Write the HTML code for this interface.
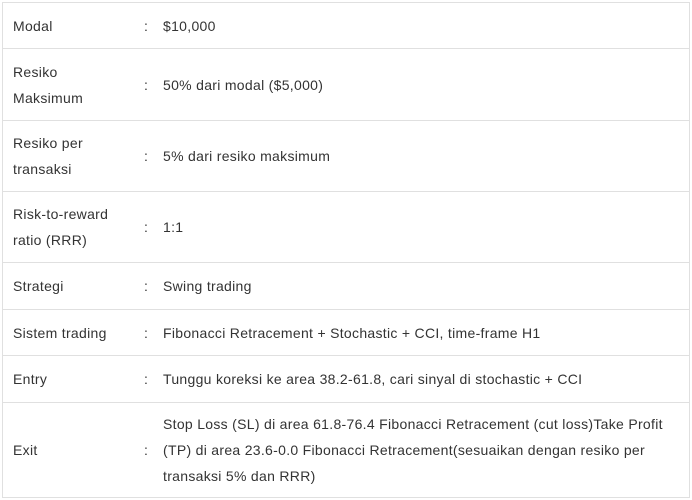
<!DOCTYPE html>
<html><head><meta charset="utf-8"><style>
body{margin:0;width:692px;height:500px;background:#fff;font-family:"Liberation Sans",sans-serif;font-size:14px;letter-spacing:0.3px;color:#333;overflow:hidden}
.t{position:absolute;left:2px;top:2px;width:686px;height:494px;border:1px solid #e0e0e0}
.r{position:absolute;left:0;width:686px;border-bottom:1px solid #e0e0e0}
.c{position:absolute;top:0;bottom:0;display:flex;align-items:center;line-height:26px}
.a{left:10px;width:115px}.b{left:141px}.d{left:160px;width:500px}
</style></head><body>
<div class="t">
<div class="r" style="top:0;height:45px"><div class="c a">Modal</div><div class="c b">:</div><div class="c d">$10,000</div></div>
<div class="r" style="top:46px;height:71px"><div class="c a">Resiko<br>Maksimum</div><div class="c b">:</div><div class="c d">50% dari modal ($5,000)</div></div>
<div class="r" style="top:118px;height:70px"><div class="c a">Resiko per<br>transaksi</div><div class="c b">:</div><div class="c d">5% dari resiko maksimum</div></div>
<div class="r" style="top:189px;height:70px"><div class="c a">Risk-to-reward<br>ratio (RRR)</div><div class="c b">:</div><div class="c d">1:1</div></div>
<div class="r" style="top:260px;height:46px"><div class="c a">Strategi</div><div class="c b">:</div><div class="c d">Swing trading</div></div>
<div class="r" style="top:307px;height:45px"><div class="c a">Sistem trading</div><div class="c b">:</div><div class="c d">Fibonacci Retracement + Stochastic + CCI, time-frame H1</div></div>
<div class="r" style="top:353px;height:46px"><div class="c a">Entry</div><div class="c b">:</div><div class="c d">Tunggu koreksi ke area 38.2-61.8, cari sinyal di stochastic + CCI</div></div>
<div class="r" style="top:400px;height:93px;border-bottom:none"><div class="c a">Exit</div><div class="c b">:</div><div class="c d">Stop Loss (SL) di area 61.8-76.4 Fibonacci Retracement (cut loss)Take Profit (TP) di area 23.6-0.0 Fibonacci Retracement(sesuaikan dengan resiko per transaksi 5% dan RRR)</div></div>
</div>
</body></html>
